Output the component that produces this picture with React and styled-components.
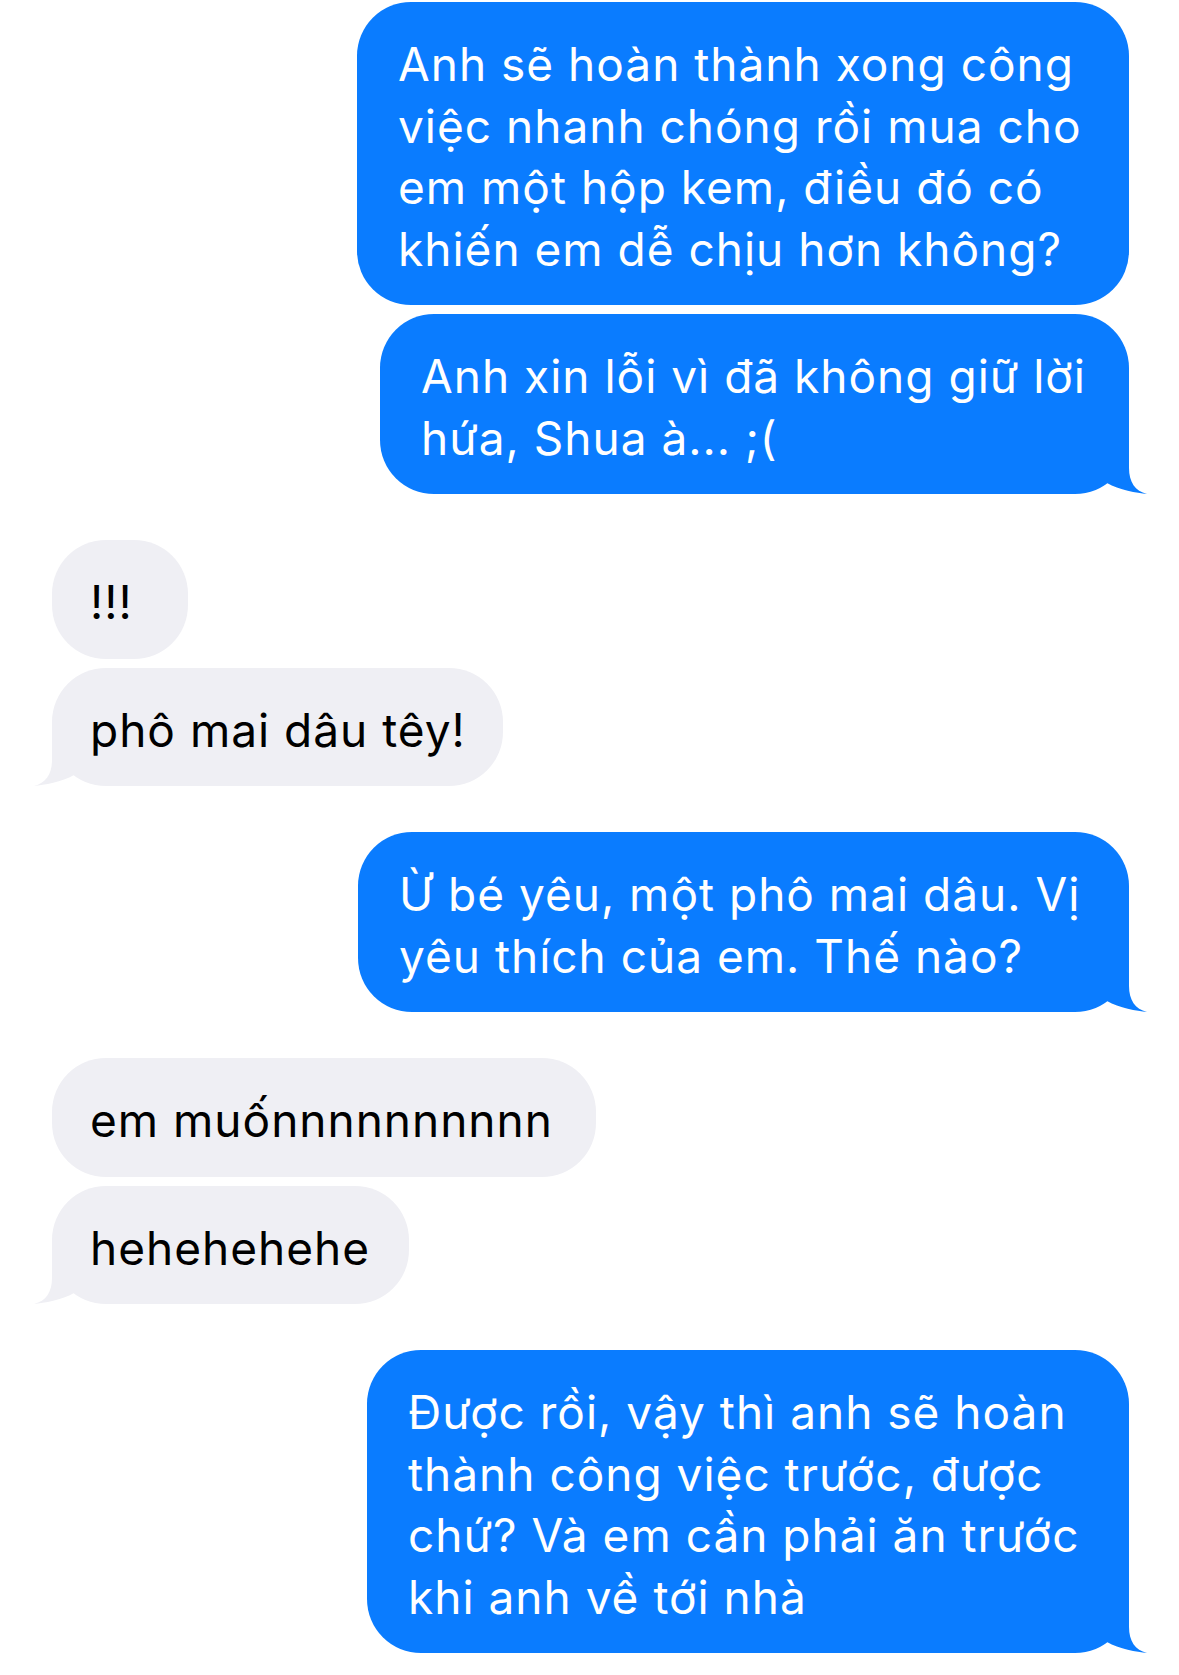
import React from 'react';
import styled, { createGlobalStyle } from 'styled-components';

const GlobalStyle = createGlobalStyle`
  html, body {
    margin: 0;
    padding: 0;
    background: #ffffff;
  }
  body {
    font-family: Inter, "Noto Sans", "Liberation Sans", sans-serif;
  }
`;

const BLUE = '#0a7cff';
const GRAY = '#efeff4';

const Thread = styled.div`
  width: 1179px;
  box-sizing: border-box;
  padding: 2px 50px 0 52px;
  display: flex;
  flex-direction: column;
  gap: 46px;
`;

const Group = styled.div`
  display: flex;
  flex-direction: column;
  align-items: ${(p) => (p.$me ? 'flex-end' : 'flex-start')};
  gap: 9px;
`;

const Bubble = styled.div`
  position: relative;
  box-sizing: border-box;
  width: ${(p) => p.$width}px;
  padding: 32px 0 25px ${(p) => (p.$me ? 41 : 38)}px;
  border-radius: 54px;
  background: ${(p) => (p.$me ? BLUE : GRAY)};
  color: ${(p) => (p.$me ? '#ffffff' : '#000000')};
  font-size: 46px;
  line-height: 61.5px;
  letter-spacing: 1px;
`;

const Line = styled.div`
  white-space: nowrap;
`;

const TailSvg = styled.svg`
  position: absolute;
  bottom: 0;
  width: 40px;
  height: 56px;
  ${(p) => (p.$me ? 'right: -18px;' : 'left: -18px; transform: scaleX(-1);')}
`;

function Tail({ me }) {
  return (
    <TailSvg $me={me} viewBox="0 0 40 56" aria-hidden="true">
      <path
        d="M22 0 L22 30 C22 44 28 53 40 56 C30 55 12 52 0 45 L0 0 Z"
        fill={me ? BLUE : GRAY}
      />
    </TailSvg>
  );
}

function Message({ me, width, lines, tail }) {
  return (
    <Bubble $me={me} $width={width}>
      {lines.map((l, i) => (
        <Line key={i}>{l}</Line>
      ))}
      {tail && <Tail me={me} />}
    </Bubble>
  );
}

const thread = [
  {
    me: true,
    messages: [
      {
        width: 772,
        lines: [
          'Anh sẽ hoàn thành xong công',
          'việc nhanh chóng rồi mua cho',
          'em một hộp kem, điều đó có',
          'khiến em dễ chịu hơn không?',
        ],
      },
      {
        width: 749,
        lines: ['Anh xin lỗi vì đã không giữ lời', 'hứa, Shua à... ;('],
      },
    ],
  },
  {
    me: false,
    messages: [
      { width: 136, lines: ['!!!'] },
      { width: 451, lines: ['phô mai dâu têy!'] },
    ],
  },
  {
    me: true,
    messages: [
      {
        width: 771,
        lines: ['Ừ bé yêu, một phô mai dâu. Vị', 'yêu thích của em. Thế nào?'],
      },
    ],
  },
  {
    me: false,
    messages: [
      { width: 544, lines: ['em muốnnnnnnnnnn'] },
      { width: 357, lines: ['hehehehehe'] },
    ],
  },
  {
    me: true,
    messages: [
      {
        width: 762,
        lines: [
          'Được rồi, vậy thì anh sẽ hoàn',
          'thành công việc trước, được',
          'chứ? Và em cần phải ăn trước',
          'khi anh về tới nhà',
        ],
      },
    ],
  },
];

export default function App() {
  return (
    <>
      <GlobalStyle />
      <Thread>
        {thread.map((g, gi) => (
          <Group key={gi} $me={g.me}>
            {g.messages.map((m, mi) => (
              <Message
                key={mi}
                me={g.me}
                width={m.width}
                lines={m.lines}
                tail={mi === g.messages.length - 1}
              />
            ))}
          </Group>
        ))}
      </Thread>
    </>
  );
}
